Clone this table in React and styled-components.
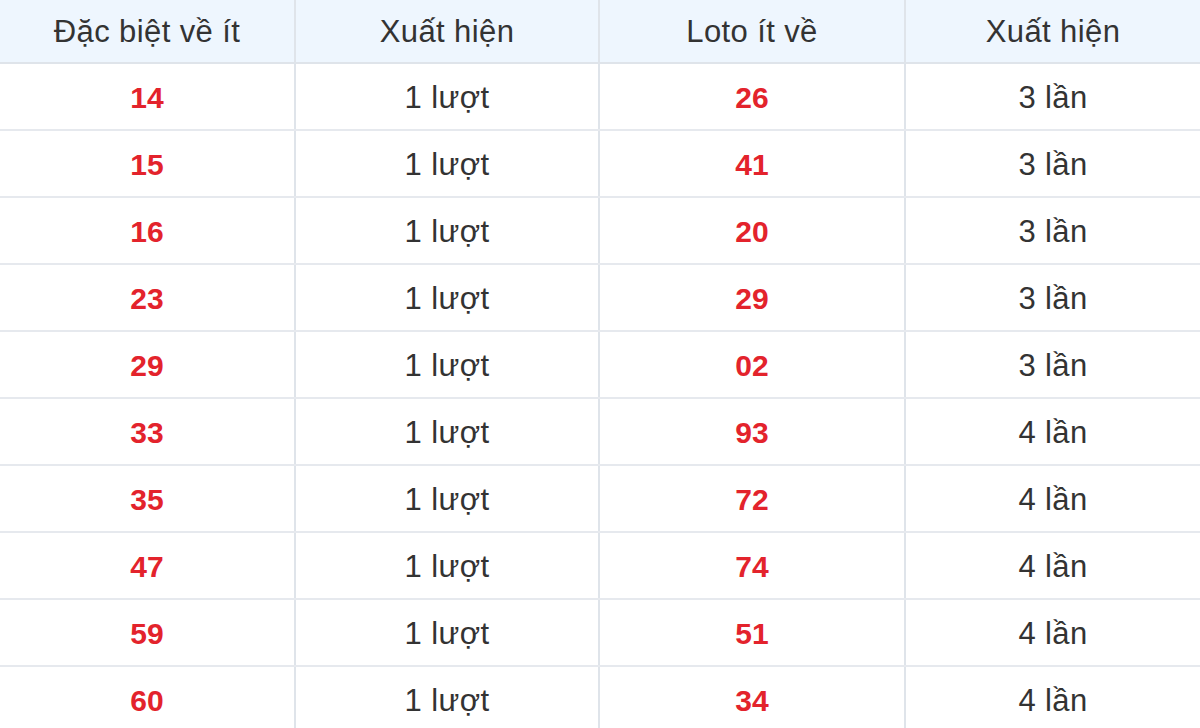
import React from "react";
import styled, { createGlobalStyle } from "styled-components";

const Global = createGlobalStyle`
  html, body { margin: 0; padding: 0; background: #fff; }
  body { font-family: "Liberation Sans", Arial, sans-serif; overflow: hidden; }
`;

const Table = styled.table`
  width: 1200px;
  border-collapse: collapse;
  table-layout: fixed;
  font-family: "Liberation Sans", Arial, sans-serif;
  font-size: 31px;
  color: #333;
`;

const HeadCell = styled.th`
  height: 60px;
  padding: 2px 0 0;
  font-weight: normal;
  letter-spacing: 0.4px;
  text-align: center;
  background: #eef6fe;
  border-right: 2px solid #dfe4ea;
  border-bottom: 2px solid #dfe4ea;
  &:last-child { border-right: none; }
`;

const Cell = styled.td`
  height: 63px;
  padding: 2px 0 0;
  text-align: center;
  border-right: 2px solid #dfe4ea;
  border-bottom: 2px solid #e6e9ee;
  color: ${(p) => (p.$hot ? "#e3232c" : "#333")};
  font-weight: ${(p) => (p.$hot ? "bold" : "normal")};
  font-size: ${(p) => (p.$hot ? "30px" : "31px")};
  letter-spacing: ${(p) => (p.$hot ? "0" : "0.4px")};
  &:last-child { border-right: none; }
`;

const rows = [
  ["14", "1 lượt", "26", "3 lần"],
  ["15", "1 lượt", "41", "3 lần"],
  ["16", "1 lượt", "20", "3 lần"],
  ["23", "1 lượt", "29", "3 lần"],
  ["29", "1 lượt", "02", "3 lần"],
  ["33", "1 lượt", "93", "4 lần"],
  ["35", "1 lượt", "72", "4 lần"],
  ["47", "1 lượt", "74", "4 lần"],
  ["59", "1 lượt", "51", "4 lần"],
  ["60", "1 lượt", "34", "4 lần"],
];

export default function App() {
  return (
    <>
      <Global />
      <Table>
        <colgroup>
          <col style={{ width: 295 }} />
          <col style={{ width: 304 }} />
          <col style={{ width: 306 }} />
          <col style={{ width: 295 }} />
        </colgroup>
        <thead>
          <tr>
            <HeadCell>Đặc biệt về ít</HeadCell>
            <HeadCell>Xuất hiện</HeadCell>
            <HeadCell>Loto ít về</HeadCell>
            <HeadCell>Xuất hiện</HeadCell>
          </tr>
        </thead>
        <tbody>
          {rows.map((r, i) => (
            <tr key={i}>
              <Cell $hot>{r[0]}</Cell>
              <Cell>{r[1]}</Cell>
              <Cell $hot>{r[2]}</Cell>
              <Cell>{r[3]}</Cell>
            </tr>
          ))}
        </tbody>
      </Table>
    </>
  );
}
